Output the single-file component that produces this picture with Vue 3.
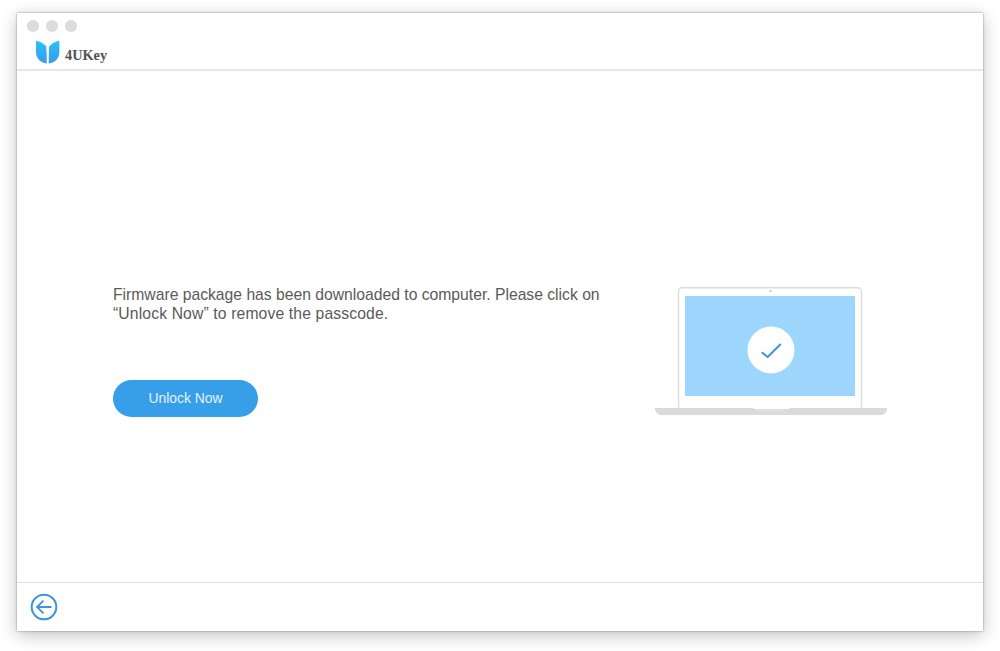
<script setup>
const dots = [0, 1, 2]
</script>

<template>
  <div class="page">
    <div class="window">
      <header class="header">
        <div class="dots">
          <span v-for="d in dots" :key="d" class="dot"></span>
        </div>
        <div class="brand">
          <svg class="logo" width="24" height="25" viewBox="0 0 24 25">
            <defs>
              <linearGradient id="lg" x1="0" y1="0" x2="0" y2="1">
                <stop offset="0" stop-color="#29c0fc" />
                <stop offset="1" stop-color="#3b9ce5" />
              </linearGradient>
            </defs>
            <path d="M0 1.8 C4 2.4 8 4.4 10.2 7.6 C10.6 12 10.8 18 10.8 24.5 C4 23.5 0 19 0 13 Z" fill="url(#lg)" />
            <path d="M23.4 1.8 C19.4 2.4 15.4 4.4 13.2 7.6 C12.8 12 12.7 18 12.7 24.5 C19.5 23.5 23.4 19 23.4 13 Z" fill="url(#lg)" />
          </svg>
          <span class="brand-name">4UKey</span>
        </div>
      </header>

      <main class="main">
        <div class="info">
          <p class="message">Firmware package has been downloaded to computer. Please click on<br /><span class="second">“Unlock Now” to remove the passcode.</span></p>
          <button class="unlock" type="button">Unlock Now</button>
        </div>
        <svg class="laptop" width="234" height="130" viewBox="0 0 234 130">
          <rect x="24.5" y="0.7" width="183" height="122" rx="4" fill="#fff" stroke="#dcdcdc" stroke-width="1.4" />
          <circle cx="116.5" cy="4" r="1" fill="#b5b5b5" />
          <rect x="31" y="9" width="170" height="100" fill="#9dd6fd" />
          <circle cx="117" cy="63" r="23.5" fill="#fff" />
          <path d="M107.7 65.3 L113.7 70 L126.7 57" fill="none" stroke="#3b94dc" stroke-width="2" />
          <path d="M1 121 H99 Q101 123.5 105 123.5 H130 Q134 123.5 136 121 H233 V123 Q231 128 226 128 H8 Q3 128 1 123 Z" fill="#dadada" />
        </svg>
      </main>

      <footer class="footer">
        <svg class="back" width="28" height="28" viewBox="0 0 28 28">
          <circle cx="14" cy="14" r="12.3" fill="none" stroke="#3b94dc" stroke-width="2" />
          <path d="M13.5 7.6 L7 14 L13.5 20.4 M7.2 14 H21.5" fill="none" stroke="#3b94dc" stroke-width="1.8" />
        </svg>
      </footer>
    </div>
  </div>
</template>

<style>
html, body { margin: 0; background: #fff; }
</style>

<style scoped>
.page {
  width: 1000px;
  height: 651px;
  padding: 13px 17px 20px;
  box-sizing: border-box;
  background: #fff;
  font-family: "Liberation Sans", Arial, sans-serif;
}
.window {
  height: 618px;
  display: flex;
  flex-direction: column;
  background: #fff;
  box-shadow: 0 0 2px rgba(0, 0, 0, .4), 0 4px 16px rgba(0, 0, 0, .25);
}
.header {
  height: 58px;
  flex: none;
  box-sizing: border-box;
  border-bottom: 2px solid #e6e6e6;
  padding: 7px 0 0 10px;
}
.dots {
  display: flex;
  gap: 7.5px;
}
.dot {
  width: 11.5px;
  height: 11.5px;
  border-radius: 50%;
  background: #dcdcdc;
}
.brand {
  display: flex;
  align-items: flex-end;
  gap: 5px;
  margin: 7px 0 0 9px;
}
.brand-name {
  font-family: "Liberation Serif", serif;
  font-weight: 700;
  font-size: 14.3px;
  line-height: 17px;
  color: #525252;
}
.main {
  flex: 1;
  display: flex;
  align-items: center;
  justify-content: space-between;
  padding: 50px 95px 0 96px;
  box-sizing: border-box;
}
.message {
  margin: -1px 0 0;
  font-size: 15.7px;
  line-height: 19px;
  color: #5a5a5a;
}
.second {
  letter-spacing: .14px;
}
.unlock {
  display: block;
  width: 145px;
  height: 37px;
  margin-top: 57px;
  border: 0;
  border-radius: 19px;
  padding: 0 0 1px;
  background: #379eea;
  color: #e4f3fe;
  font: inherit;
  font-size: 13.9px;
}
.footer {
  height: 49px;
  flex: none;
  box-sizing: border-box;
  border-top: 1px solid #dedede;
  display: flex;
  align-items: center;
  padding: 0 0 1px 13px;
}
</style>
